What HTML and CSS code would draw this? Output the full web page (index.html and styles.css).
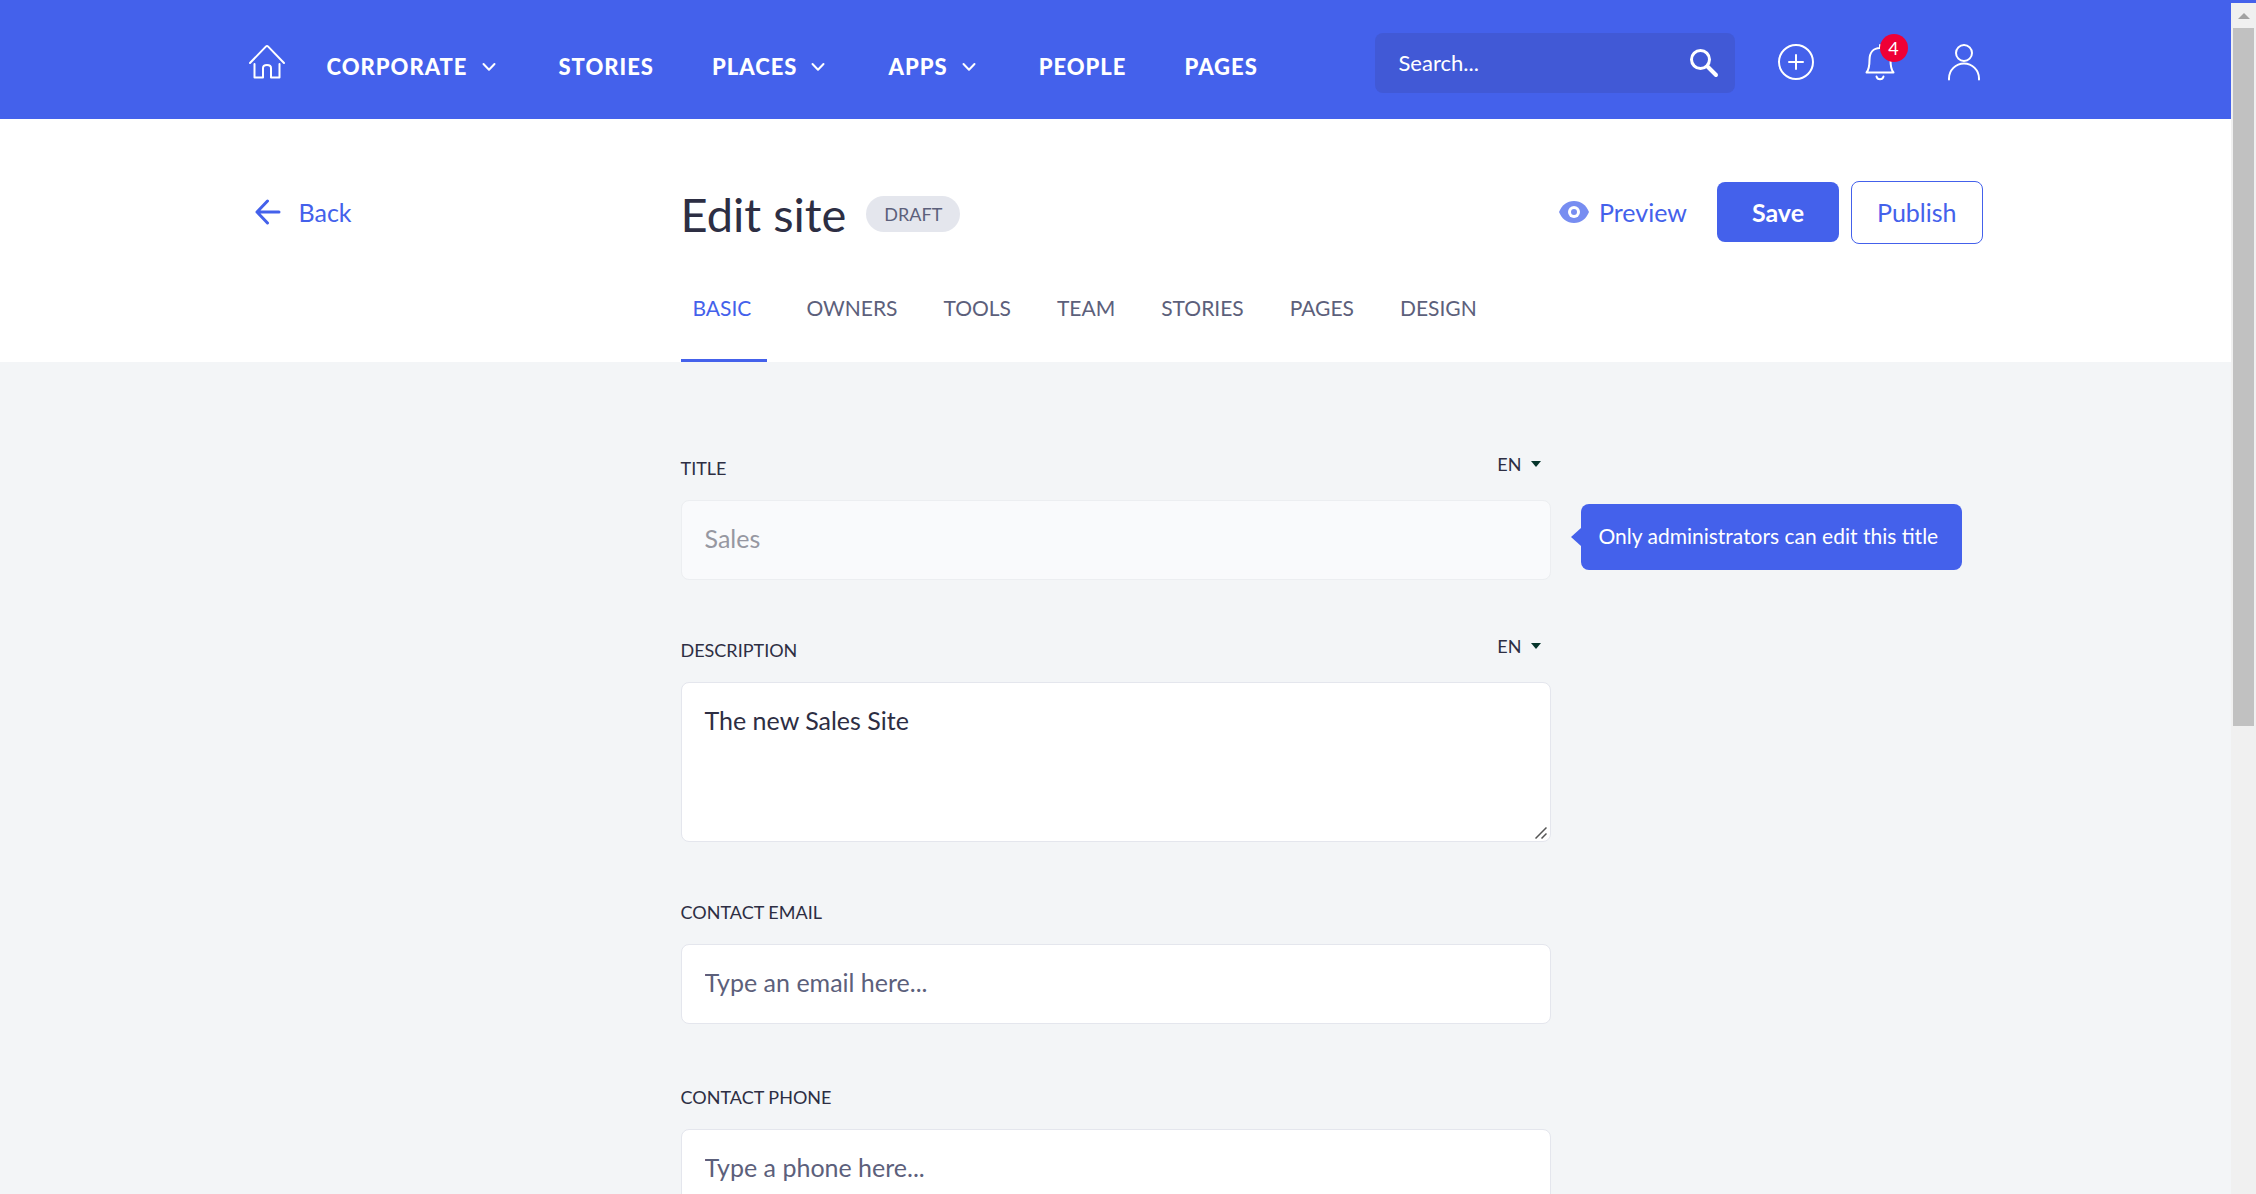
FILE: index.html
```html
<!DOCTYPE html>
<html lang="en">
<head>
<meta charset="utf-8">
<meta name="viewport" content="width=device-width, initial-scale=1">
<title>Edit site</title>
<link rel="stylesheet" href="styles.css">
</head>
<body>
<div class="topline"></div>
<div class="shell">
  <div class="page">
    <header class="topbar">
      <div class="container topbar-row">
        <nav class="nav" aria-label="Main">
          <a class="home" href="#" aria-label="Home">
            <svg width="36" height="36" viewBox="0 0 36 36" fill="none" stroke="currentColor" stroke-width="2" stroke-linecap="round" stroke-linejoin="round"><path d="M1 19 16.800 2.600q1.200-1.200 2.400 0L35 19M5.500 20v13.500h8.500V24q0-3 4-3t4 3v9.500h8.500V20"/></svg>
          </a>
          <a class="nav-link" href="#">CORPORATE<svg class="chevron" width="14" height="10" viewBox="0 0 14 10"><path d="M1.500 2 7 7.800 12.500 2"/></svg></a>
          <a class="nav-link" href="#">STORIES</a>
          <a class="nav-link" href="#">PLACES<svg class="chevron" width="14" height="10" viewBox="0 0 14 10"><path d="M1.500 2 7 7.800 12.500 2"/></svg></a>
          <a class="nav-link" href="#">APPS<svg class="chevron" width="14" height="10" viewBox="0 0 14 10"><path d="M1.500 2 7 7.800 12.500 2"/></svg></a>
          <a class="nav-link" href="#">PEOPLE</a>
          <a class="nav-link" href="#">PAGES</a>
        </nav>
        <div class="tools">
          <form class="search">
            <input class="search-input" type="text" placeholder="Search..." aria-label="Search">
            <button class="search-button" type="button" aria-label="Search">
              <svg width="30" height="30" viewBox="0 0 30 30" fill="none" stroke="currentColor" stroke-linecap="round"><circle cx="11.500" cy="11.500" r="9" stroke-width="3"/><path d="m18.500 18.500 8.500 8.500" stroke-width="4"/></svg>
            </button>
          </form>
          <button class="icon-button" type="button" aria-label="Add">
            <svg width="38" height="38" viewBox="0 0 38 38" fill="none" stroke="currentColor" stroke-width="2" stroke-linecap="round"><circle cx="19" cy="19" r="17"/><path d="M19 12v14M12 19h14"/></svg>
          </button>
          <button class="icon-button" type="button" aria-label="Notifications">
            <svg width="38" height="38" viewBox="0 0 38 38" fill="none" stroke="currentColor" stroke-width="2" stroke-linecap="round" stroke-linejoin="round"><path d="M19 2v3M5.500 29.500h27C29.500 26 29.500 22 29.500 17 29.500 9.500 25.500 5 19 5S8.500 9.500 8.500 17c0 5 0 9-3 12.500ZM15.500 33.500a3.600 3.600 0 0 0 7 0"/></svg>
            <span class="count">4</span>
          </button>
          <button class="icon-button" type="button" aria-label="Profile">
            <svg width="38" height="38" viewBox="0 0 38 38" fill="none" stroke="currentColor" stroke-width="2" stroke-linecap="round"><circle cx="19" cy="10" r="8"/><path d="M4 36.500V35.500a15 15 0 0 1 30 0v1"/></svg>
          </button>
        </div>
      </div>
    </header>

    <section class="heading">
      <div class="container columns">
        <a class="back" href="#"><svg width="26" height="26" viewBox="0 0 26 26" fill="none" stroke="currentColor" stroke-width="3" stroke-linecap="round" stroke-linejoin="round"><path d="M24 13H2M12.500 2 2 13l10.500 11"/></svg>Back</a>
        <div class="title-row">
          <h1 class="title">Edit site</h1>
          <span class="status">DRAFT</span>
        </div>
        <div class="actions">
          <a class="preview" href="#"><svg width="30" height="22" viewBox="0 0 30 22"><path fill="#778df1" d="M15 0C8 0 2.600 4.400 0 11c2.600 6.600 8 11 15 11s12.400-4.400 15-11C27.400 4.400 22 0 15 0Z"/><circle cx="15" cy="11" r="6" fill="#fff"/><circle cx="15" cy="11" r="3" fill="#778df1"/></svg>Preview</a>
          <button class="button button-primary" type="button">Save</button>
          <button class="button button-outline" type="button">Publish</button>
        </div>
        <nav class="tabs" aria-label="Site settings">
          <a class="tab tab-active" href="#">BASIC</a>
          <a class="tab" href="#">OWNERS</a>
          <a class="tab" href="#">TOOLS</a>
          <a class="tab" href="#">TEAM</a>
          <a class="tab" href="#">STORIES</a>
          <a class="tab" href="#">PAGES</a>
          <a class="tab" href="#">DESIGN</a>
        </nav>
      </div>
    </section>

    <main class="container columns">
      <form class="form">
        <div class="field">
          <div class="label-row">
            <label class="label" for="title">TITLE</label>
            <button class="language" type="button">EN<span class="caret"></span></button>
          </div>
          <div class="control">
            <input class="input" id="title" type="text" value="Sales" disabled>
            <div class="tooltip" role="tooltip">Only administrators can edit this title</div>
          </div>
        </div>
        <div class="field">
          <div class="label-row">
            <label class="label" for="description">DESCRIPTION</label>
            <button class="language" type="button">EN<span class="caret"></span></button>
          </div>
          <div class="control">
            <textarea class="input textarea" id="description">The new Sales Site</textarea>
            <svg class="grip" width="12" height="12" viewBox="0 0 12 12" fill="none" stroke="#555" stroke-width="1.500"><path d="M.5 11.500l11-11M6.500 11.500l5-5"/></svg>
          </div>
        </div>
        <div class="field">
          <div class="label-row"><label class="label" for="email">CONTACT EMAIL</label></div>
          <input class="input" id="email" type="email" placeholder="Type an email here...">
        </div>
        <div class="field field-spaced">
          <div class="label-row"><label class="label" for="phone">CONTACT PHONE</label></div>
          <input class="input" id="phone" type="tel" placeholder="Type a phone here...">
        </div>
      </form>
    </main>
  </div>
  <div class="scrollbar" aria-hidden="true">
    <span class="scroll-arrow"></span>
    <span class="scroll-thumb"></span>
  </div>
</div>
</body>
</html>
```
FILE: styles.css
```css
:root {
  --blue: #4461eb;
  --ink: #2d2e43;
  --muted: #5c607b;
  --line: #e4e6ed;
  --canvas: #f3f5f7;
}

* { box-sizing: border-box; }

body {
  margin: 0;
  height: 100vh;
  display: flex;
  flex-direction: column;
  overflow: hidden;
  background: var(--canvas);
  color: var(--ink);
  font: 25px/32px Lato, "Open Sans", sans-serif;
}

a { color: inherit; text-decoration: none; }

button, input, textarea { font: inherit; color: inherit; }

button {
  padding: 0;
  border: 0;
  background: none;
  cursor: pointer;
}

svg { display: block; flex: none; }

.topline { flex: none; height: 3px; background: var(--blue); }

.shell { flex: 1; min-height: 0; display: flex; }

.page { flex: 1; min-width: 0; overflow: hidden; }

.container { width: 100%; max-width: 1734px; margin: 0 auto; }

.columns { display: grid; grid-template-columns: 1fr minmax(0, 870px) 1fr; }

/* Top bar */
.topbar { background: var(--blue); color: #fff; }

.topbar-row {
  display: flex;
  align-items: center;
  justify-content: space-between;
  height: 116px;
  padding-top: 2px;
}

.nav { display: flex; align-items: center; gap: 58px; }

.home { margin-right: -16px; }

.nav-link {
  display: flex;
  align-items: center;
  gap: 14px;
  padding-top: 10px;
  font-size: 22px;
  font-weight: 900;
  letter-spacing: 1px;
}

.chevron {
  margin-right: 5px;
  fill: none;
  stroke: currentColor;
  stroke-width: 2;
  stroke-linecap: round;
  stroke-linejoin: round;
}

.tools { display: flex; align-items: center; gap: 46px; }

.search {
  display: flex;
  align-items: center;
  width: 360px;
  height: 60px;
  margin: 2px -4px 0 0;
  padding: 0 16px 0 24px;
  border-radius: 8px;
  background: #4159d6;
}

.search-input {
  flex: 1;
  min-width: 0;
  padding: 0;
  border: 0;
  outline: 0;
  background: none;
  font-size: 22px;
}

.search-input::placeholder { color: #fff; opacity: 1; }

.icon-button { position: relative; }

.count {
  position: absolute;
  top: -9px;
  right: -9px;
  width: 28px;
  height: 28px;
  border-radius: 50%;
  background: #ee0036;
  font-size: 18px;
  line-height: 28px;
}

/* Page heading */
.heading { background: #fff; }

.heading .columns { padding-top: 62px; }

.back {
  display: flex;
  align-items: center;
  gap: 18px;
  height: 62px;
  padding-left: 6px;
  color: var(--blue);
}

.title-row { display: flex; align-items: center; gap: 20px; height: 66px; }

.title { margin: 0; font-size: 47px; line-height: 52px; font-weight: 400; }

.status {
  padding: 0 18px;
  border-radius: 18px;
  background: #e4e6ed;
  color: var(--muted);
  font-size: 18px;
  line-height: 36px;
}

.actions {
  display: flex;
  align-items: center;
  justify-content: flex-end;
  gap: 12px;
  height: 62px;
}

.preview {
  display: flex;
  align-items: center;
  gap: 10px;
  margin-right: 18px;
  color: var(--blue);
}

.button { height: 60px; border-radius: 8px; padding: 0 35px; line-height: 30px; }

.button-primary { background: var(--blue); color: #fff; font-weight: 700; }

.button-outline { height: 63px; padding: 0 25px; border: 1px solid var(--blue); color: var(--blue); }

.tabs { grid-column: 2; display: flex; gap: 22px; margin-top: 45px; }

.tab {
  height: 70px;
  padding: 0 12px;
  color: var(--muted);
  font-size: 21px;
}

.tab-active {
  margin-right: 5px;
  padding-right: 16px;
  border-bottom: 3px solid var(--blue);
  color: var(--blue);
}

/* Form */
.form { grid-column: 2; padding-top: 82px; }

.field { margin-bottom: 46px; }

.field-spaced { margin-top: 49px; }

.label-row {
  display: flex;
  justify-content: space-between;
  height: 56px;
  padding-top: 12px;
}

.label, .language { font-size: 18px; line-height: 24px; }

.language {
  display: flex;
  align-items: center;
  gap: 9px;
  height: 24px;
  margin: -4px 10px 0 0;
}

.caret {
  border: 5px solid transparent;
  border-top: 6px solid #05342b;
  border-bottom: 0;
}

.control { position: relative; }

.input {
  display: block;
  width: 100%;
  height: 80px;
  padding: 21px 23px 25px;
  border: 1px solid var(--line);
  border-radius: 8px;
  outline: 0;
  background: #fff;
}

.input:disabled { background: #f9fafc; border-color: #eceef1; color: #9697a1; }

.input::placeholder { color: var(--muted); opacity: 1; }

.textarea { height: 160px; resize: none; }

.grip { position: absolute; right: 4px; bottom: 3px; pointer-events: none; }

.tooltip {
  position: absolute;
  top: 4px;
  left: calc(100% + 30px);
  padding: 16px 24px 18px 18px;
  border-radius: 8px;
  background: var(--blue);
  color: #fff;
  font-size: 21px;
  white-space: nowrap;
}

.tooltip::before {
  content: "";
  position: absolute;
  top: 24px;
  left: -10px;
  border: 9px solid transparent;
  border-right: 10px solid var(--blue);
  border-left: 0;
}

/* Scrollbar */
.scrollbar {
  flex: none;
  display: flex;
  flex-direction: column;
  align-items: center;
  width: 25px;
  background: #f0f0f0;
}

.scroll-arrow {
  margin: 10px 0 9px;
  border: 6px solid transparent;
  border-bottom: 6px solid #a2a2a2;
  border-top: 0;
}

.scroll-thumb { width: 21px; height: 58.6%; background: #c1c1c1; }
```
